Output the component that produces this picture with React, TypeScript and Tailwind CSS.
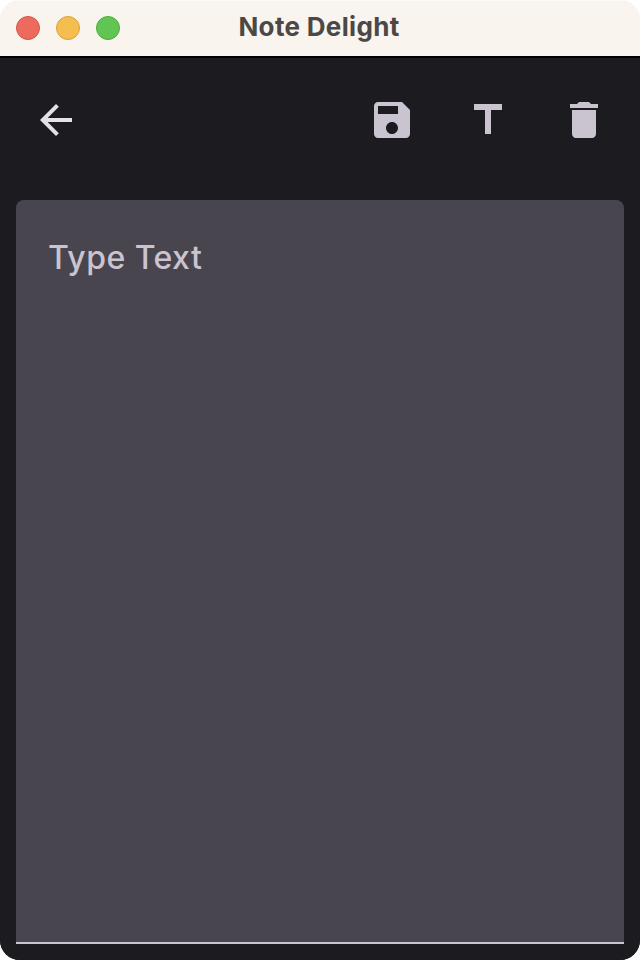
import React from "react";

function Icon({ d, className }: { d: string; className: string }) {
  return (
    <svg viewBox="0 0 24 24" className={`size-12 ${className}`} fill="currentColor" aria-hidden="true">
      <path d={d} />
    </svg>
  );
}

const icons = {
  back: "M20 11H7.83l5.59-5.59L12 4l-8 8 8 8 1.41-1.41L7.83 13H20v-2z",
  save: "M17 3H5c-1.11 0-2 .9-2 2v14c0 1.1.89 2 2 2h14c1.1 0 2-.9 2-2V7l-4-4zm-5 16c-1.66 0-3-1.34-3-3s1.34-3 3-3 3 1.34 3 3-1.34 3-3 3zm3-10H5V5h10v4z",
  title: "M5 4v3h5.5v12h3V7H19V4z",
  trash: "M6 19c0 1.1.9 2 2 2h8c1.1 0 2-.9 2-2V7H6v12zM19 4h-3.5l-1-1h-5l-1 1H5v2h14V4z",
};

export default function App() {
  return (
    <div className="h-[960px] w-[640px] bg-white font-['Inter',sans-serif]">
      <div className="flex h-full flex-col overflow-hidden rounded-[20px] bg-[linear-gradient(#f9f4ed_50%,#1c1b20_50%)]">
        <header className="grid h-14 shrink-0 grid-cols-[1fr_auto_1fr] items-center border-t border-[#fcfaf7] bg-[#f9f4ed] px-4 pb-px">
          <div className="flex gap-4">
            <span className="size-6 rounded-full border border-[#d35549] bg-[#ec6a5e]" />
            <span className="size-6 rounded-full border border-[#d8a13f] bg-[#f4bf4f]" />
            <span className="size-6 rounded-full border border-[#4fab3e] bg-[#61c554]" />
          </div>
          <h1 className="pr-[2px] pb-0.5 text-[26px] leading-8 font-bold tracking-[0.32px] text-[#4b4845]">Note Delight</h1>
        </header>
        <div className="flex min-h-0 flex-1 flex-col border-t-2 border-black bg-[#1c1b20]">
          <nav className="flex h-[124px] shrink-0 items-center justify-between px-8">
            <button aria-label="Back"><Icon d={icons.back} className="text-[#e5e1e6]" /></button>
            <div className="flex gap-12">
              <button aria-label="Save"><Icon d={icons.save} className="text-[#cac4d0]" /></button>
              <button aria-label="Edit title"><Icon d={icons.title} className="text-[#cac4d0]" /></button>
              <button aria-label="Delete"><Icon d={icons.trash} className="text-[#cac4d0]" /></button>
            </div>
          </nav>
          <main className="mx-4 mt-[18px] mb-4 flex-1 rounded-t-lg border-b-2 border-[#cac4d0] bg-[#49454f] px-8 pt-[34px] text-[32px] leading-[48px] font-[450] tracking-[0.45px] text-[#cac4d0]">
            Type Text
          </main>
        </div>
      </div>
    </div>
  );
}
